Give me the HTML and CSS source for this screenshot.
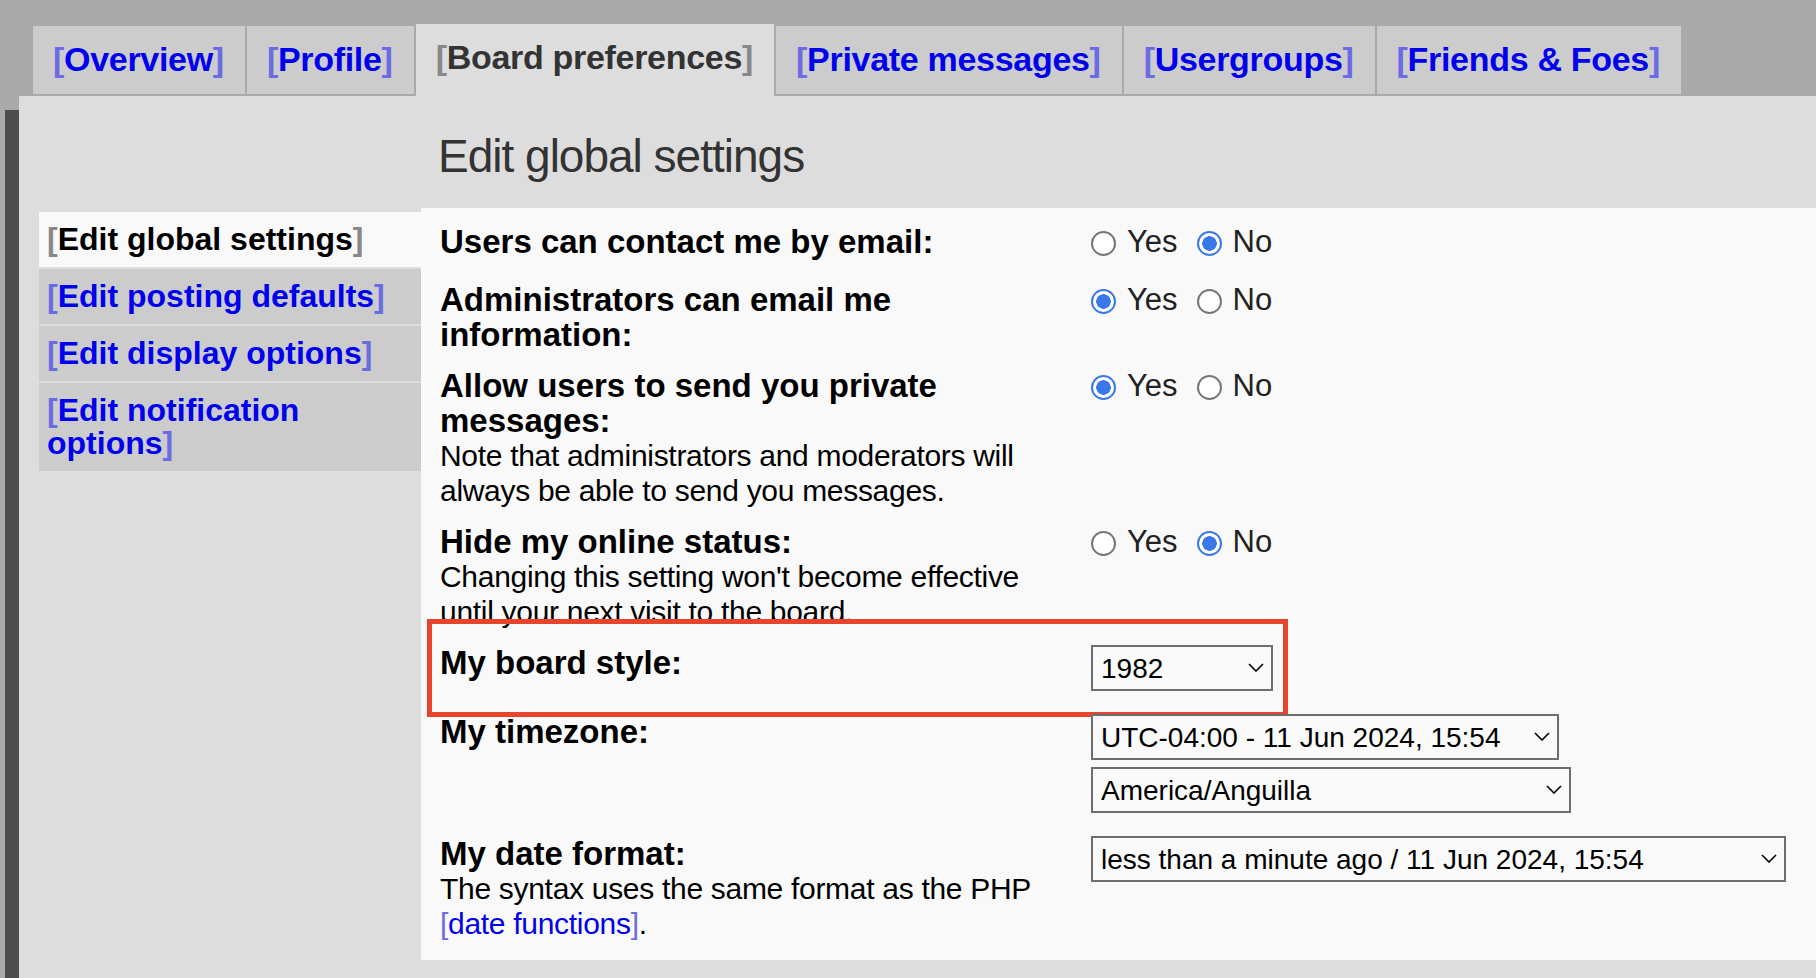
FILE: index.html
```html
<!DOCTYPE html>
<html lang="en">
<head>
    <meta charset="UTF-8">
    <meta name="viewport" content="width=device-width, initial-scale=1.0">
    <title>User Control Panel - Board preferences</title>
    <link rel="stylesheet" href="styles.css">
</head>
<body>
    <nav class="tabs">
        <a class="tab" href="#">Overview</a>
        <a class="tab" href="#">Profile</a>
        <span class="tab active">Board preferences</span>
        <a class="tab" href="#">Private messages</a>
        <a class="tab" href="#">Usergroups</a>
        <a class="tab" href="#">Friends &amp; Foes</a>
    </nav>

    <div class="panel">
        <aside class="side">
            <span class="side-item current">Edit global settings</span>
            <a class="side-item" href="#">Edit posting defaults</a>
            <a class="side-item" href="#">Edit display options</a>
            <a class="side-item" href="#">Edit notification options</a>
        </aside>

        <main class="main">
            <h2>Edit global settings</h2>

            <form class="settings">
                <div class="row">
                    <div class="label"><b>Users can contact me by email:</b></div>
                    <div class="value">
                        <div class="choices"><label><input type="radio" name="viewemail">Yes</label><label><input type="radio" name="viewemail" checked>No</label></div>
                    </div>
                </div>

                <div class="row">
                    <div class="label"><b>Administrators can email me information:</b></div>
                    <div class="value">
                        <div class="choices"><label><input type="radio" name="massemail" checked>Yes</label><label><input type="radio" name="massemail">No</label></div>
                    </div>
                </div>

                <div class="row">
                    <div class="label">
                        <b>Allow users to send you private messages:</b>
                        <span class="explain">Note that administrators and moderators will always be able to send you messages.</span>
                    </div>
                    <div class="value">
                        <div class="choices"><label><input type="radio" name="allowpm" checked>Yes</label><label><input type="radio" name="allowpm">No</label></div>
                    </div>
                </div>

                <div class="row">
                    <div class="label">
                        <b>Hide my online status:</b>
                        <span class="explain">Changing this setting won't become effective until your next visit to the board.</span>
                    </div>
                    <div class="value">
                        <div class="choices"><label><input type="radio" name="hideonline">Yes</label><label><input type="radio" name="hideonline" checked>No</label></div>
                    </div>
                </div>

                <div class="row">
                    <div class="label"><b>My board style:</b></div>
                    <div class="value">
                        <span class="select w-style">
                            <select><option>1982</option></select>
                            <svg class="chev" viewBox="0 0 16 9"><path d="M1 1 L8 8 L15 1"/></svg>
                        </span>
                    </div>
                    <span class="callout"></span>
                </div>

                <div class="row">
                    <div class="label"><b>My timezone:</b></div>
                    <div class="value">
                        <span class="select w-time">
                            <select><option>UTC-04:00 - 11 Jun 2024, 15:54</option></select>
                            <svg class="chev" viewBox="0 0 16 9"><path d="M1 1 L8 8 L15 1"/></svg>
                        </span>
                        <span class="select w-zone">
                            <select><option>America/Anguilla</option></select>
                            <svg class="chev" viewBox="0 0 16 9"><path d="M1 1 L8 8 L15 1"/></svg>
                        </span>
                    </div>
                </div>

                <div class="row">
                    <div class="label">
                        <b>My date format:</b>
                        <span class="explain">The syntax uses the same format as the PHP <a class="inline" href="#">date functions</a>.</span>
                    </div>
                    <div class="value">
                        <span class="select w-date">
                            <select><option>less than a minute ago / 11 Jun 2024, 15:54</option></select>
                            <svg class="chev" viewBox="0 0 16 9"><path d="M1 1 L8 8 L15 1"/></svg>
                        </span>
                    </div>
                </div>
            </form>
        </main>
    </div>
</body>
</html>
```

FILE: styles.css
```css
body {
    margin: 0;
    background-color: #aaaaaa;
    font-family: 'Liberation Sans', Arial, sans-serif;
    color: #000;
}

/* Tabs along the top */
.tabs {
    display: flex;
    align-items: flex-end;
    gap: 2px;
    height: 72px;
    padding: 24px 0 0 33px;
}

.tab {
    display: block;
    height: 68px;
    margin-bottom: 2px;
    padding: 0 21px 0 20px;
    background-color: #cccccc;
    color: #0000ee;
    font-size: 34px;
    font-weight: bold;
    line-height: 66px;
    letter-spacing: -0.3px;
    text-decoration: none;
    white-space: nowrap;
}

.tab::before,
.side-item::before,
.inline::before {
    content: "[";
    color: #6b6be3;
}

.tab::after,
.side-item::after,
.inline::after {
    content: "]";
    color: #6b6be3;
}

.tab.active {
    height: 72px;
    margin-bottom: 0;
    background-color: #dddddd;
    color: #333;
}

.tab.active::before,
.tab.active::after,
.side-item.current::before,
.side-item.current::after {
    color: #888;
}

/* Main panel */
.panel {
    display: flex;
    margin-left: 19px;
    padding-bottom: 18px;
    background-color: #dddddd;
    box-shadow: -14px 14px 0 #4d4d4d;
}

.side {
    flex: none;
    width: 382px;
    padding: 116px 0 0 20px;
    display: flex;
    flex-direction: column;
    align-items: stretch;
    gap: 2px;
}

.side-item {
    padding: 11px 10px 11px 8px;
    background-color: #cccccc;
    color: #0000ee;
    font-size: 32px;
    font-weight: bold;
    line-height: 33px;
    text-decoration: none;
}

.side-item.current {
    background-color: #f9f9f9;
    color: #000;
}

.main {
    flex: 1;
    min-width: 0;
}

.main h2 {
    margin: 34px 0 25px;
    padding-left: 17px;
    color: #333;
    font-size: 46px;
    font-weight: normal;
    line-height: 53px;
    letter-spacing: -1px;
}

/* Settings list */
.settings {
    display: flex;
    flex-direction: column;
    gap: 16px;
    padding: 16px 0 19px;
    background-color: #f9f9f9;
}

.row {
    position: relative;
    display: flex;
}

.label {
    flex: none;
    width: 611px;
    padding: 0 40px 0 19px;
}

.label b {
    display: block;
    font-size: 33px;
    line-height: 35px;
}

.explain {
    display: block;
    font-size: 30px;
    line-height: 35px;
    letter-spacing: -0.3px;
}

.inline {
    color: #0000ee;
    text-decoration: none;
}

.value {
    flex: 1;
}

.choices {
    margin-bottom: 7px;
    font-size: 31px;
    line-height: 35px;
    color: #222;
}

.choices label {
    margin-right: 19px;
}

.choices input {
    -webkit-appearance: none;
    appearance: none;
    box-sizing: border-box;
    width: 25px;
    height: 25px;
    margin: 0 11px 0 0;
    vertical-align: middle;
    border: 2px solid #767676;
    border-radius: 50%;
    background-color: #fff;
}

.choices input:checked {
    border-color: #3a78e8;
    background: radial-gradient(circle, #3a78e8 0 7px, #fff 7.5px);
}

/* Drop-downs */
.select {
    position: relative;
    display: block;
    margin-bottom: 7px;
}

.select select {
    -webkit-appearance: none;
    appearance: none;
    box-sizing: border-box;
    width: 100%;
    height: 46px;
    padding: 0 36px 0 8px;
    border: 2px solid #6e6e6e;
    border-radius: 0;
    background-color: #fafafa;
    color: #000;
    font-family: 'Liberation Sans', Arial, sans-serif;
    font-size: 28px;
}

.chev {
    position: absolute;
    right: 9px;
    top: 18px;
    width: 16px;
    height: 9px;
    fill: none;
    stroke: #000;
    stroke-width: 1.6;
    pointer-events: none;
}

.w-style { width: 182px; }
.w-time { width: 468px; }
.w-zone { width: 480px; }
.w-date { width: 695px; }

/* Highlight box drawn over the board style row */
.callout {
    position: absolute;
    left: 6px;
    top: -26px;
    width: 861px;
    height: 98px;
    box-sizing: border-box;
    border: 5px solid #e8432b;
    pointer-events: none;
}
```
